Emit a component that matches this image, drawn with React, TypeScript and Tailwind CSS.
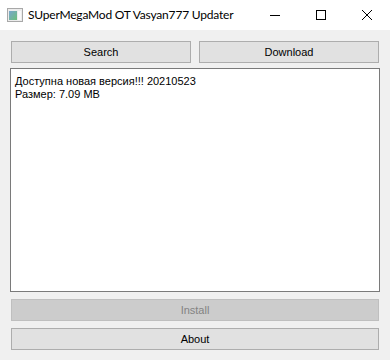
import React from "react";

const WinButton = ({
  title,
  disabled,
}: {
  title: string;
  disabled?: boolean;
}) => (
  <button
    disabled={disabled}
    className={
      disabled
        ? "block h-[22px] w-full border border-[#bfbfbf] bg-[#cccccc] text-[11px] leading-[20px] text-[#838383] font-['Liberation_Sans',sans-serif]"
        : "block h-[22px] w-full border border-[#adadad] bg-[#e1e1e1] text-[11px] leading-[20px] text-black font-['Liberation_Sans',sans-serif]"
    }
  >
    {title}
  </button>
);

const AppIcon = () => (
  <svg width="16" height="14" viewBox="0 0 16 14" className="shrink-0">
    <defs>
      <linearGradient id="g" x1="0" y1="0" x2="1" y2="1">
        <stop offset="0" stopColor="#7aa6cf" />
        <stop offset="1" stopColor="#6cbf7a" />
      </linearGradient>
    </defs>
    <rect x="0.5" y="0.5" width="15" height="13" fill="#ececec" stroke="#a8a8a8" />
    <rect x="2" y="3" width="8" height="9" fill="url(#g)" />
    <rect x="11" y="3" width="3" height="9" fill="#fafafa" />
  </svg>
);

export default function App() {
  return (
    <div className="w-[390px] h-[360px] flex flex-col bg-[#f0f0f0]">
      <div className="h-[30px] shrink-0 bg-white flex items-center pl-[7px]">
        <AppIcon />
        <span className="ml-[5px] text-[12px] tracking-[-0.2px] text-black font-['Lato',sans-serif]">
          SUperMegaMod OT Vasyan777 Updater
        </span>
        <div className="ml-auto flex items-center h-full">
          <div className="w-[46px] h-full flex items-center justify-center">
            <svg width="10" height="10" viewBox="0 0 10 10">
              <path d="M0 5.5h10" stroke="#000" strokeWidth="1" />
            </svg>
          </div>
          <div className="w-[46px] h-full flex items-center justify-center">
            <svg width="10" height="10" viewBox="0 0 10 10">
              <rect x="0.5" y="0.5" width="9" height="9" fill="none" stroke="#000" />
            </svg>
          </div>
          <div className="w-[46px] h-full flex items-center justify-center">
            <svg width="10" height="10" viewBox="0 0 10 10">
              <path d="M0 0L10 10M10 0L0 10" stroke="#000" strokeWidth="1" />
            </svg>
          </div>
        </div>
      </div>

      <div className="flex flex-col px-[10px] pt-[11px]">
        <div className="mx-[1px] grid grid-cols-2 gap-[8px]">
          <WinButton title="Search" />
          <WinButton title="Download" />
        </div>

        <div className="mt-[5px] h-[224px] bg-white border border-[#7a7a7a] px-[4px] pt-[6px] text-[11px] leading-[13px] text-black font-['Liberation_Sans',sans-serif]">
          <div>Доступна новая версия!!! 20210523</div>
          <div>Размер: 7.09 MB</div>
        </div>

        <div className="mx-[1px] mt-[7px] flex flex-col gap-[7px]">
          <WinButton title="Install" disabled />
          <WinButton title="About" />
        </div>
      </div>
    </div>
  );
}
